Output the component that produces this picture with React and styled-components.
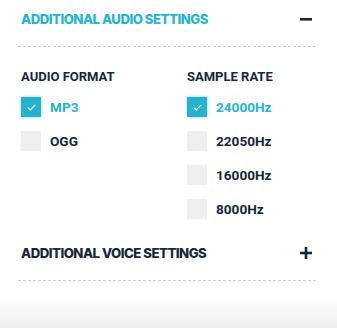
import React from "react";
import styled, { createGlobalStyle } from "styled-components";

const Global = createGlobalStyle`
  html, body {
    margin: 0;
    padding: 0;
    background: #fff;
  }
  body {
    font-family: Roboto, "Liberation Sans", sans-serif;
    color: #16283a;
  }
`;

const TEAL = "#27b3d0";
const DARK = "#16283a";

const Page = styled.div`
  width: 337px;
  height: 328px;
  display: flex;
  flex-direction: column;
  overflow: hidden;
`;

const Panel = styled.section`
  padding: 0 21px 0 18px;
`;

// accordion header, text sits ~28px above the dashed rule
const Header = styled.div`
  display: flex;
  align-items: center;
  justify-content: space-between;
  height: 47px;
  padding: 0 4px 9px 3px;
  border-bottom: 1px dashed #cfcfcf;
  box-sizing: border-box;
`;

const Title = styled.h2`
  margin: 0;
  font-family: Inter, "Open Sans", sans-serif;
  font-weight: 800;
  font-size: 13.2px;
  letter-spacing: -0.5px;
  color: ${p => (p.open ? TEAL : DARK)};
`;

const Body = styled.div`
  display: grid;
  grid-template-columns: 166px 1fr;
  padding: 22px 0 0 3px;
  height: 187px;
  box-sizing: border-box;
`;

const Column = styled.div`
  display: flex;
  flex-direction: column;
  gap: 14px;
`;

const Label = styled.div`
  font-size: 13px;
  font-weight: 700;
  line-height: 16px;
  color: ${DARK};
  margin-bottom: -2px;
`;

const Option = styled.label`
  display: flex;
  align-items: center;
  gap: 9px;
  font-size: 13.6px;
  font-weight: 700;
  line-height: 20px;
  color: ${p => (p.checked ? TEAL : DARK)};
`;

const Box = styled.span`
  width: 20px;
  height: 20px;
  display: flex;
  align-items: center;
  justify-content: center;
  background: ${p => (p.checked ? TEAL : "#efefef")};
  box-shadow: ${p => (p.checked ? "0 0 3px rgba(39,179,208,0.55)" : "none")};
`;

const Fade = styled.div`
  flex: 1;
  margin-top: 16px;
  background: linear-gradient(#ffffff, #eeeeee);
`;

const Check = () => (
  <svg width="9" height="7" viewBox="0 0 9 7">
    <path d="M0.8 3.6 L3.3 6 L8.2 0.9" fill="none" stroke="#fff" strokeWidth="1.1" />
  </svg>
);

const Minus = () => (
  <svg width="12" height="12" viewBox="0 0 12 12">
    <rect x="0" y="5" width="12" height="2.6" fill={DARK} />
  </svg>
);

const Plus = () => (
  <svg width="12" height="12" viewBox="0 0 12 12">
    <rect x="0" y="4.7" width="12" height="2.6" fill={DARK} />
    <rect x="4.7" y="0" width="2.6" height="12" fill={DARK} />
  </svg>
);

const formats = [
  { name: "MP3", checked: true },
  { name: "OGG", checked: false },
];

const rates = [
  { name: "24000Hz", checked: true },
  { name: "22050Hz", checked: false },
  { name: "16000Hz", checked: false },
  { name: "8000Hz", checked: false },
];

const renderOptions = list =>
  list.map(o => (
    <Option key={o.name} checked={o.checked}>
      <Box checked={o.checked}>{o.checked && <Check />}</Box>
      {o.name}
    </Option>
  ));

export default function App() {
  return (
    <Page>
      <Global />
      <Panel>
        <Header>
          <Title open>ADDITIONAL AUDIO SETTINGS</Title>
          <Minus />
        </Header>
        <Body>
          <Column>
            <Label>AUDIO FORMAT</Label>
            {renderOptions(formats)}
          </Column>
          <Column>
            <Label>SAMPLE RATE</Label>
            {renderOptions(rates)}
          </Column>
        </Body>
        <Header>
          <Title>ADDITIONAL VOICE SETTINGS</Title>
          <Plus />
        </Header>
      </Panel>
      <Fade />
    </Page>
  );
}
